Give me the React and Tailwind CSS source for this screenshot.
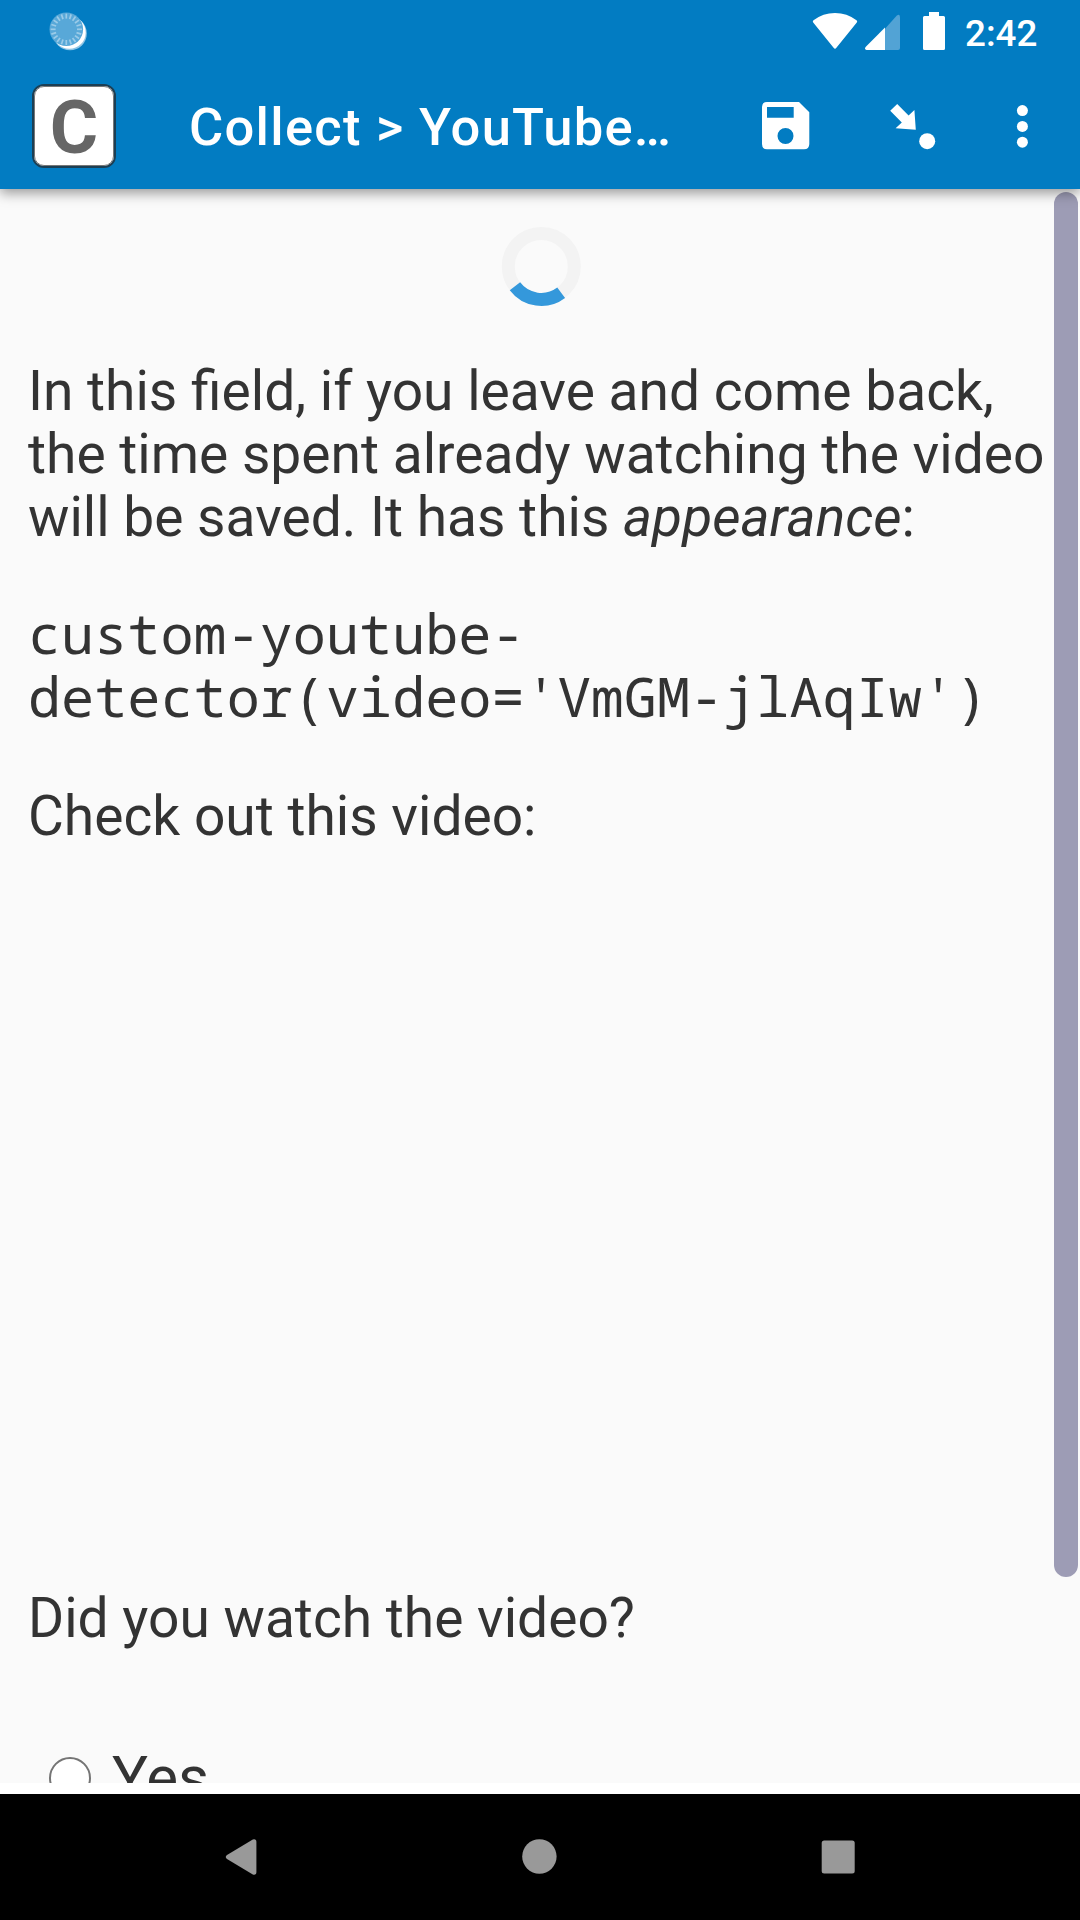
function StatusBar() {
  const ticks = Array.from({ length: 20 }, (_, i) => i * 18);
  return (
    <div className="flex h-[63px] items-start">
      <svg className="mt-3 ml-12 h-10 w-10" viewBox="48 12 40 40">
        <circle cx="70" cy="33.5" r="16.8" fill="#8fc5e5" />
        <circle cx="69.3" cy="32.4" r="16.4" fill="#fff" />
        <circle cx="66.3" cy="29.3" r="16.8" fill="#58a8d8" />
        {ticks.map((a) => (
          <line key={a} x1="66.3" y1="13.6" x2="66.3" y2="18.6" stroke="#9bcbe8" strokeWidth="1.7" transform={`rotate(${a} 66.3 29.3)`} />
        ))}
      </svg>
      <div className="flex-1" />
      <svg className="h-[63px] w-[146px]" viewBox="812 0 146 63" fill="#fff">
        <path d="M813.5 20.3Q812.2 21.3 813.2 22.6L833.6 47.8Q835 49.6 836.4 47.8L856.8 22.6Q857.8 21.3 856.5 20.3Q847 13 835 13T813.5 20.3Z" />
        <path d="M900 17.2V48Q900 50 898 50H885V28.8L896.6 15.8Q900 13 900 17.2Z" fill="#52a3d5" />
        <path d="M885 27.5V50H866.5Q864 49 865.6 46.9Z" />
        <path d="M929 12H939V16H943.5Q945 16 945 17.5V48.5Q945 50 943.5 50H924.5Q923 50 923 48.5V17.5Q923 16 924.5 16H929Z" />
      </svg>
      <div className="mt-[12px] mr-[49px] w-[73px] text-[36.75px] leading-[43px] font-medium whitespace-nowrap pl-[7px]">2:42</div>
    </div>
  );
}

function AppBar() {
  return (
    <div className="flex h-[126px] items-center">
      <div className="ml-8 flex h-[84px] w-[84px] items-center justify-center rounded-[12px] border-2 border-[#1c3f54] bg-white">
        <div className="flex h-[80px] w-[80px] items-center justify-center rounded-[10px] border border-[#777] pt-[3px] text-[74px] leading-none font-bold text-[#666]">C</div>
      </div>
      <h1 className="mt-[2px] ml-[73px] w-[515px] text-[52.5px] leading-[62px] font-medium tracking-[1.27px] whitespace-nowrap">{"Collect > YouTube…"}</h1>
      <svg className="h-[126px] w-[376px]" viewBox="704 63 376 126" fill="#fff">
        <path fillRule="evenodd" d="M767 102H799L809.3 112.3V144Q809.3 149.3 804 149.3H767Q762 149.3 762 144V107Q762 102 767 102ZM767 107V117.7H793.7V107ZM785.5 128A8 8 0 1 0 785.5 144A8 8 0 1 0 785.5 128Z" />
        <path d="M897.2 104L908.6 115.4L914.4 110L915.8 129.8L895.6 128.2L901.8 122.6L890.2 110.8Z" />
        <circle cx="927.2" cy="141.2" r="8" />
        <circle cx="1022.4" cy="110.6" r="5.5" />
        <circle cx="1022.4" cy="126.4" r="5.5" />
        <circle cx="1022.4" cy="142.2" r="5.5" />
      </svg>
    </div>
  );
}

function NavBar() {
  return (
    <nav className="h-[126px] bg-black">
      <svg className="h-full w-full" viewBox="0 1794 1080 126" fill="#999">
        <path d="M227 1855L252.8 1839.5Q256.4 1838.6 256.4 1842V1872Q256.4 1875.4 252.8 1874.5L227 1859Q224.5 1857 227 1855Z" />
        <circle cx="539.4" cy="1856.5" r="17.2" />
        <rect x="821.7" y="1840.5" width="33" height="33" rx="2.5" />
      </svg>
    </nav>
  );
}

export default function App() {
  return (
    <div className="flex h-[1920px] w-[1080px] flex-col overflow-hidden bg-white font-['Roboto',sans-serif]">
      <header className="relative z-20 h-[189px] shrink-0 bg-[#027cc2] text-white shadow-[0_4px_12px_rgba(0,0,0,0.4)]">
        <StatusBar />
        <AppBar />
      </header>
      <main className="relative mb-[11px] h-[1594px] shrink-0 overflow-hidden bg-[#fafafa] text-[55.125px] leading-[63px] text-[#333]">
        <div className="pl-7">
          <div className="flex h-[171px] pt-[37px] pl-[473px]">
            <svg className="h-20 w-20" viewBox="-40.3 -40.4 80 80" fill="none" strokeWidth="13">
              <circle r="33" stroke="#f3f3f3" />
              <path d="M19.86 26.35A33 33 0 0 1 -26.35 19.86" stroke="#3498db" />
            </svg>
          </div>
          <p className="whitespace-nowrap">
            In this field, if you leave and come back,
            <br />
            the time spent already watching the video
            <br />
            will be saved. It has this <em>appearance</em>:
          </p>
          <p className="mt-[52px] font-['Droid_Sans_Mono','Noto_Sans_Mono','DejaVu_Sans_Mono',monospace] tracking-[0.04px] whitespace-nowrap">
            custom-youtube-
            <br />
            detector(video='VmGM-jlAqIw')
          </p>
          <p className="mt-[58px]">Check out this video:</p>
          <div className="h-[739px]" />
          <p>Did you watch the video?</p>
          <label className="mt-[94px] flex items-start">
            <span className="mt-[13px] ml-[21px] h-[42px] w-[42px] rounded-full border-[2.5px] border-[#757575] bg-white" />
            <span className="mt-[2px] ml-[21px] text-[60px]">Yes</span>
          </label>
        </div>
        <div className="absolute top-[2.5px] right-[2.5px] h-[1385px] w-6 rounded-full bg-[#9d9cb5]" />
      </main>
      <NavBar />
    </div>
  );
}
